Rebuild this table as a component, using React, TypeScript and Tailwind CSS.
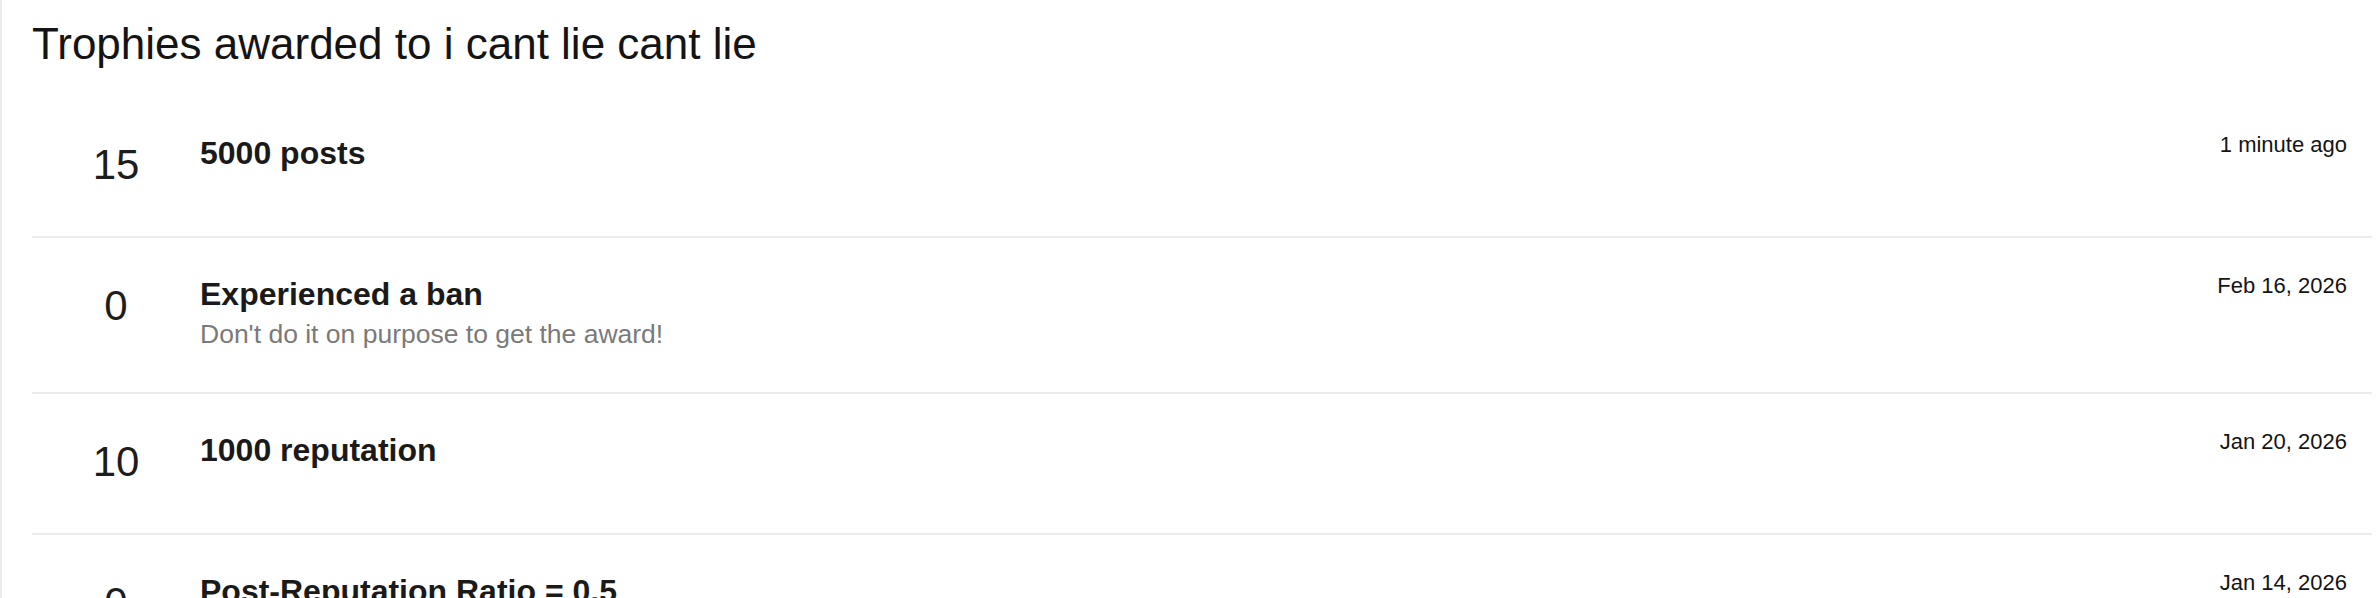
const trophies = [
  { points: 15, title: '5000 posts', when: '1 minute ago' },
  { points: 0, title: 'Experienced a ban', desc: "Don't do it on purpose to get the award!", when: 'Feb 16, 2026' },
  { points: 10, title: '1000 reputation', when: 'Jan 20, 2026' },
  { points: 0, title: 'Post-Reputation Ratio = 0.5', when: 'Jan 14, 2026' },
  { points: 5, title: '100 reputation', when: 'Jan 10, 2026' },
];

const App = () => {
  return (
    <div
      className="h-[598px] overflow-hidden bg-white text-[#1a1a1a]"
      style={{ fontFamily: '"Liberation Sans", Arial, Helvetica, sans-serif' }}
    >
      <div className="h-full border-l-2 border-[#ebebeb] pl-[30px] pr-[4px]">
        <h1 className="pt-[18px] mb-[26px] text-[44px] leading-[1.2] font-normal text-[#141414]">
          Trophies awarded to i cant lie cant lie
        </h1>

        <ul>
          {trophies.map((t) => (
            <li key={t.title} className="flex items-start border-b-2 border-[#ececec] pt-[37px] pb-[40px] pr-[25px]">
              <span className="w-[168px] shrink-0 text-center text-[42px] leading-[62px] text-[#1d1d1d]">{t.points}</span>
              <div className="flex-1 min-w-0">
                <h2 className="text-[32px] font-bold leading-[38px] text-[#1a1a1a]">{t.title}</h2>
                {t.desc && <div className="mt-[3px] text-[26.5px] leading-[36px] text-[#7a7a7a]">{t.desc}</div>}
              </div>
              <time className="shrink-0 text-[22px] leading-none text-[#141414]">{t.when}</time>
            </li>
          ))}
        </ul>
      </div>
    </div>
  );
};

export default App;
